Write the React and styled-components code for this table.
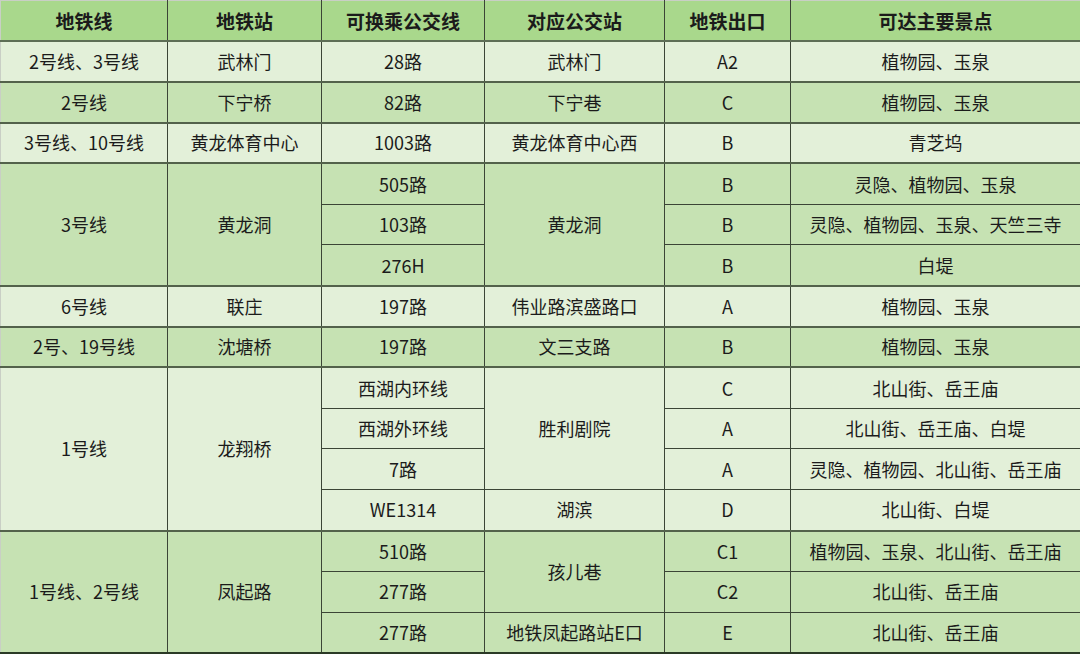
import React from 'react';
import styled, { createGlobalStyle } from 'styled-components';

const GlobalStyle = createGlobalStyle`
  html, body {
    margin: 0;
    padding: 0;
    background: #ffffff;
  }
  body {
    font-family: 'Noto Sans CJK SC', 'Noto Sans', sans-serif;
  }
`;

const Table = styled.table`
  width: 1080px;
  border-collapse: collapse;
  table-layout: fixed;
  color: #1b1b1b;
  border-top: 1px solid #c9cfc5;
  border-left: 1px solid #c9cfc5;
  border-right: 1px solid #2b3a26;
  border-bottom: 2px solid #2b3a26;
`;

const HeadCell = styled.th`
  background: #a9d88c;
  font-size: 19px;
  font-weight: 700;
  line-height: 1;
  height: 39px;
  padding: 0;
  text-align: center;
  border-right: 1px solid #3b4536;
  border-bottom: 2px solid #5d6e55;
  white-space: nowrap;

  &:last-child {
    border-right: none;
  }
`;

const Cell = styled.td`
  background: ${(p) => (p.$tone === 'dark' ? '#c6e2b3' : '#e3f0d9')};
  font-size: 18px;
  line-height: 1;
  padding: 0 0 1px;
  text-align: center;
  vertical-align: middle;
  border: 1px solid #3b4536;
  border-top: ${(p) => (p.$groupTop ? '2px solid #53624b' : '1px solid #3b4536')};
  white-space: nowrap;

  &:first-child {
    border-left: none;
  }
  &:last-child {
    border-right: none;
  }
`;

const Row = styled.tr`
  height: 40.8px;
`;

const widths = [167, 154, 163, 180, 126, 290];
const headers = ['地铁线', '地铁站', '可换乘公交线', '对应公交站', '地铁出口', '可达主要景点'];

// each row: tone, cells [text, rowSpan]
const rows = [
  { tone: 'light', cells: [['2号线、3号线'], ['武林门'], ['28路'], ['武林门'], ['A2'], ['植物园、玉泉']] },
  { tone: 'dark', cells: [['2号线'], ['下宁桥'], ['82路'], ['下宁巷'], ['C'], ['植物园、玉泉']] },
  { tone: 'light', cells: [['3号线、10号线'], ['黄龙体育中心'], ['1003路'], ['黄龙体育中心西'], ['B'], ['青芝坞']] },
  { tone: 'dark', cells: [['3号线', 3], ['黄龙洞', 3], ['505路'], ['黄龙洞', 3], ['B'], ['灵隐、植物园、玉泉']] },
  { tone: 'dark', inner: true, cells: [['103路'], ['B'], ['灵隐、植物园、玉泉、天竺三寺']] },
  { tone: 'dark', inner: true, cells: [['276H'], ['B'], ['白堤']] },
  { tone: 'light', cells: [['6号线'], ['联庄'], ['197路'], ['伟业路滨盛路口'], ['A'], ['植物园、玉泉']] },
  { tone: 'dark', cells: [['2号、19号线'], ['沈塘桥'], ['197路'], ['文三支路'], ['B'], ['植物园、玉泉']] },
  { tone: 'light', cells: [['1号线', 4], ['龙翔桥', 4], ['西湖内环线'], ['胜利剧院', 3], ['C'], ['北山街、岳王庙']] },
  { tone: 'light', inner: true, cells: [['西湖外环线'], ['A'], ['北山街、岳王庙、白堤']] },
  { tone: 'light', inner: true, cells: [['7路'], ['A'], ['灵隐、植物园、北山街、岳王庙']] },
  { tone: 'light', inner: true, cells: [['WE1314'], ['湖滨'], ['D'], ['北山街、白堤']] },
  { tone: 'dark', cells: [['1号线、2号线', 3], ['凤起路', 3], ['510路'], ['孩儿巷', 2], ['C1'], ['植物园、玉泉、北山街、岳王庙']] },
  { tone: 'dark', inner: true, cells: [['277路'], ['C2'], ['北山街、岳王庙']] },
  { tone: 'dark', inner: true, cells: [['277路'], ['地铁凤起路站E口'], ['E'], ['北山街、岳王庙']] },
];

export default function App() {
  return (
    <>
      <GlobalStyle />
      <Table>
        <colgroup>
          {widths.map((w, i) => (
            <col key={i} style={{ width: w }} />
          ))}
        </colgroup>
        <thead>
          <tr>
            {headers.map((h) => (
              <HeadCell key={h}>{h}</HeadCell>
            ))}
          </tr>
        </thead>
        <tbody>
          {rows.map((r, i) => (
            <Row key={i}>
              {r.cells.map(([text, span], j) => (
                <Cell
                  key={j}
                  rowSpan={span || 1}
                  $tone={r.tone}
                  $groupTop={!r.inner && i > 0 && rows[i - 1].tone !== r.tone}
                >
                  {text}
                </Cell>
              ))}
            </Row>
          ))}
        </tbody>
      </Table>
    </>
  );
}
